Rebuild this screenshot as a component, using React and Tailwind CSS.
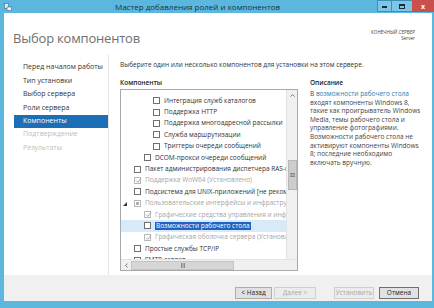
import React from "react";

const Box = ({ state = "off", muted = false }) => {
  const border = muted ? "border-[#b8b8b8]" : "border-[#707070]";
  return (
    <span
      className={`relative inline-flex w-[7px] h-[7px] shrink-0 border bg-white ${border} items-center justify-center`}
    >
      {state === "on" && (
        <svg width="7" height="7" viewBox="0 0 7 7" className="absolute left-[0px] top-[-1px]">
          <path d="M1 3.6 L2.8 5.4 L6 1.2" fill="none" stroke={muted ? "#a8a8a8" : "#333"} strokeWidth="1" />
        </svg>
      )}
      {state === "part" && <span className="w-[3px] h-[3px] bg-[#b0b0b0]" />}
    </span>
  );
};

const items = [
  { lvl: 2, text: "Интеграция служб каталогов" },
  { lvl: 2, text: "Поддержка HTTP" },
  { lvl: 2, text: "Поддержка многоадресной рассылки" },
  { lvl: 2, text: "Служба маршрутизации" },
  { lvl: 2, text: "Триггеры очереди сообщений" },
  { lvl: 1, text: "DCOM-прокси очереди сообщений" },
  { lvl: 0, text: "Пакет администрирования диспетчера RAS-подключений" },
  { lvl: 0, text: "Поддержка WoW64 (Установлено)", state: "on", muted: true },
  { lvl: 0, text: "Подсистема для UNIX-приложений [не рекомендуется]" },
  { lvl: 0, text: "Пользовательские интерфейсы и инфраструктура", state: "part", muted: true, open: true },
  { lvl: 1, text: "Графические средства управления и инфраструктура", state: "on", muted: true },
  { lvl: 1, text: "Возможности рабочего стола", selected: true },
  { lvl: 1, text: "Графическая оболочка сервера (Установлено)", state: "on", muted: true },
  { lvl: 0, text: "Простые службы TCP/IP" },
  { lvl: 0, text: "SMTP-сервер" },
];

const indent = ["pl-[13px]", "pl-[23px]", "pl-[32px]"];

const nav = [
  { t: "Перед началом работы" },
  { t: "Тип установки" },
  { t: "Выбор сервера" },
  { t: "Роли сервера" },
  { t: "Компоненты", active: true },
  { t: "Подтверждение", off: true },
  { t: "Результаты", off: true },
];

const Grip = ({ vertical }) =>
  vertical ? (
    <svg width="5" height="4" viewBox="0 0 5 4">
      <path d="M0 0.5H5M0 2H5M0 3.5H5" stroke="#6a6a6a" strokeWidth="0.7" />
    </svg>
  ) : (
    <svg width="4" height="5" viewBox="0 0 4 5">
      <path d="M0.5 0V5M2 0V5M3.5 0V5" stroke="#6a6a6a" strokeWidth="0.7" />
    </svg>
  );

export default function App() {
  return (
    <div className="w-[434px] h-[308px] bg-[#5cb7df] flex flex-col overflow-hidden font-['Open_Sans',sans-serif] text-[#333]">
      {/* title bar */}
      <div className="h-[13px] flex items-center relative shrink-0">
        <svg width="8" height="8" viewBox="0 0 8 8" className="ml-[4px]">
          <rect x="0.5" y="0.5" width="4" height="5" fill="#d9eef8" stroke="#3b6f8c" strokeWidth="0.6" />
          <rect x="3" y="4" width="4.5" height="3.5" fill="#f4f4f4" stroke="#3b6f8c" strokeWidth="0.6" />
        </svg>
        <div className="flex-1 text-center text-[8px] leading-none text-[#1a3340] pl-[6px]">
          Мастер добавления ролей и компонентов
        </div>
        <div className="flex h-[12px] self-start">
          <div className="w-[15px] h-full border border-[#3e8fb5] bg-[#7cc6e8] flex items-end justify-center pb-[3px]">
            <span className="w-[5px] h-[2px] bg-[#1b2f3b]" />
          </div>
          <div className="w-[20px] h-full border-y border-[#3e8fb5] bg-[#7cc6e8] flex items-center justify-center">
            <span className="w-[6px] h-[5px] border border-[#1b2f3b] border-t-2" />
          </div>
          <div className="w-[22px] h-full bg-[#c9504c] flex items-center justify-center text-[7px] font-bold text-white leading-none">
            x
          </div>
        </div>
      </div>

      {/* client area */}
      <div className="flex-1 ml-[4px] mr-[2px] bg-white flex flex-col min-h-0">
        {/* header */}
        <div className="h-[42px] shrink-0 flex justify-between pl-[9px] pr-[17px]">
          <div className="pt-[19px] text-[13px] leading-none text-[#707070] tracking-[-0.2px]">
            Выбор компонентов
          </div>
          <div className="pt-[17px] text-right text-[4.6px] leading-[5.5px] text-[#444]">
            <div>КОНЕЧНЫЙ СЕРВЕР</div>
            <div>Server</div>
          </div>
        </div>

        {/* body */}
        <div className="flex-1 flex min-h-0">
          {/* nav */}
          <div className="w-[105px] shrink-0 border-r border-[#e3e3e3] pt-[6px] pl-[10px]">
            {nav.map((n) => (
              <div
                key={n.t}
                className={`h-[13.4px] flex items-center pl-[9px] text-[7px] whitespace-nowrap ${
                  n.active ? "bg-[#1c6eb6] text-white" : n.off ? "text-[#bdbdbd]" : "text-[#333]"
                }`}
              >
                {n.t}
              </div>
            ))}
          </div>

          {/* main */}
          <div className="flex-1 pl-[11px] pt-[6px] min-w-0">
            <div className="text-[6.5px] leading-[8px] whitespace-nowrap">
              Выберите один или несколько компонентов для установки на этом сервере.
            </div>
            <div className="flex mt-[10px]">
              <div className="w-[178px] shrink-0">
                <div className="text-[6.5px] leading-[8px] font-semibold text-[#222]">Компоненты</div>
                <div className="mt-[2px] h-[182px] border border-[#a9a9a9] flex flex-col">
                  <div className="flex-1 flex min-h-0">
                    <div className="flex-1 overflow-hidden pt-[5px]">
                      {items.map((it) => (
                        <div
                          key={it.text}
                          className={`relative h-[11.4px] flex items-center ${indent[it.lvl]} ${
                            it.selected ? "bg-[#d7eaf9]" : ""
                          }`}
                        >
                          {it.open && (
                            <svg width="4" height="4" viewBox="0 0 4 4" className="absolute left-[2px] top-[4px]">
                              <path d="M4 0V4H0Z" fill="#333" />
                            </svg>
                          )}
                          <Box state={it.state} muted={it.muted} />
                          <span
                            className={`ml-[4px] text-[6.5px] leading-[8px] whitespace-nowrap ${
                              it.selected
                                ? "bg-[#2262c0] text-white px-[1px]"
                                : it.muted
                                ? "text-[#a5a5a5]"
                                : "text-[#333]"
                            }`}
                          >
                            {it.text}
                          </span>
                        </div>
                      ))}
                    </div>
                    {/* vertical scrollbar */}
                    <div className="w-[11px] shrink-0 bg-[#f0f0f0] border-l border-[#e4e4e4] flex flex-col items-center">
                      <div className="h-[10px] flex items-center justify-center">
                        <svg width="5" height="3" viewBox="0 0 5 3">
                          <path d="M0.5 2.6L2.5 0.6L4.5 2.6" fill="none" stroke="#606060" strokeWidth="0.8" />
                        </svg>
                      </div>
                      <div className="mt-[60px] w-[9px] h-[30px] bg-[#cdcdcd] border border-[#b8b8b8] flex items-center justify-center">
                        <Grip vertical />
                      </div>
                    </div>
                  </div>
                  {/* horizontal scrollbar */}
                  <div className="h-[11px] shrink-0 flex border-t border-[#e4e4e4]">
                    <div className="flex-1 bg-[#f0f0f0] flex items-center">
                      <div className="w-[10px] flex items-center justify-center">
                        <svg width="3" height="5" viewBox="0 0 3 5">
                          <path d="M2.6 0.5L0.6 2.5L2.6 4.5" fill="none" stroke="#606060" strokeWidth="0.8" />
                        </svg>
                      </div>
                      <div className="w-[103px] h-[9px] bg-[#d6d6d6] border border-[#c4c4c4] flex items-center justify-center">
                        <Grip />
                      </div>
                    </div>
                    <div className="w-[11px] bg-[#f0f0f0]" />
                  </div>
                </div>
              </div>
              <div className="pl-[12px] min-w-0 overflow-hidden">
                <div className="text-[6.5px] leading-[8px] font-semibold text-[#222]">Описание</div>
                <div className="mt-[3px] text-[6.5px] leading-[8.6px] text-[#444] whitespace-nowrap">
                  <div>
                    В <span className="text-[#2a7bb0]">возможности рабочего стола</span>
                  </div>
                  <div>входят компоненты Windows 8,</div>
                  <div>такие как проигрыватель Windows</div>
                  <div>Media, темы рабочего стола и</div>
                  <div>управление фотографиями.</div>
                  <div>Возможности рабочего стола не</div>
                  <div>активируют компоненты Windows</div>
                  <div>8; последние необходимо</div>
                  <div>включать вручную.</div>
                </div>
              </div>
            </div>
          </div>
        </div>

        {/* footer */}
        <div className="h-[26px] shrink-0 bg-[#f0f0f0] flex items-start pt-[12px] pl-[231px] text-[6.5px]">
          <button className="w-[37px] h-[12px] border border-[#adadad] bg-[#e1e1e1] text-[#222] leading-none">
            &lt; Назад
          </button>
          <button className="ml-[2px] w-[42px] h-[12px] border border-[#cfcfcf] bg-[#ececec] text-[#a8a8a8] leading-none">
            Далее &gt;
          </button>
          <button className="ml-[18px] w-[40px] h-[12px] border border-[#cfcfcf] bg-[#ececec] text-[#a8a8a8] leading-none">
            Установить
          </button>
          <button className="ml-[5px] w-[40px] h-[12px] border border-[#6f6f6f] bg-[#e1e1e1] text-[#222] leading-none">
            Отмена
          </button>
        </div>
      </div>
      <div className="h-[7px] shrink-0" />
    </div>
  );
}
